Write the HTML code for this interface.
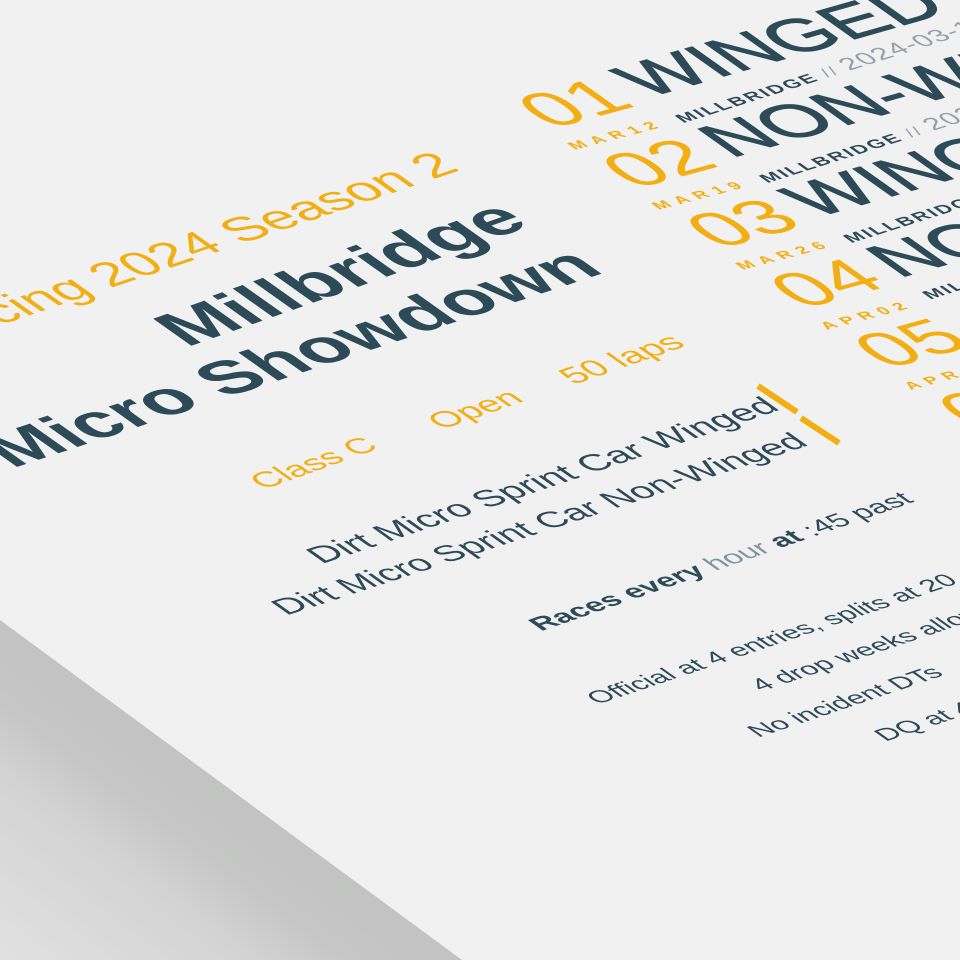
<!DOCTYPE html>
<html><head><meta charset="utf-8">
<style>
html,body{margin:0;padding:0;}
body{width:960px;height:960px;overflow:hidden;background:#f1f1f1;position:relative;font-family:"Liberation Sans",sans-serif;}
.t{position:absolute;white-space:nowrap;line-height:1;transform-origin:0 0;font-family:"Liberation Sans",sans-serif;}
.o{color:#f2ae12;}
.d{color:#2d4a58;}
.g{color:#97a2a8;}
.n{font-size:82px;}
</style></head><body>
<svg width="960" height="960" style="position:absolute;left:0;top:0">
<defs>
<linearGradient id="sh" x1="230" y1="790" x2="40" y2="1046" gradientUnits="userSpaceOnUse">
<stop offset="0" stop-color="#c2c3c2"/>
<stop offset="0.2" stop-color="#c5c6c5"/>
<stop offset="0.38" stop-color="#d2d3d2"/>
<stop offset="1" stop-color="#e4e5e4"/>
</linearGradient>
</defs>
<polygon points="0,620 462,960 0,960" fill="url(#sh)"/>
<line x1="758" y1="386" x2="797" y2="412" stroke="#f2ae12" stroke-width="6"/>
<line x1="801" y1="418" x2="839" y2="443" stroke="#f2ae12" stroke-width="6"/>
</svg>

<div class="t o" style="left:462px;top:170px;font-size:55px;transform:matrix(0.95,-0.32,0.72,0.51,0,0) translate(-100%,-0.846em)">Racing 2024 Season 2</div>

<div class="t d" style="left:360px;top:287px;font-size:77px;font-weight:bold;transform:matrix(0.95,-0.336,0.72,0.51,0,0) translate(-50%,-0.846em)">Millbridge</div>
<div class="t d" style="left:310px;top:371px;font-size:76px;font-weight:bold;transform:matrix(0.95,-0.314,0.72,0.51,0,0) translate(-50%,-0.846em)">Micro Showdown</div>

<div class="t o" style="left:264px;top:490px;font-size:35px;transform:matrix(0.95,-0.34,0.72,0.51,0,0) translate(0,-0.846em)">Class C</div>
<div class="t o" style="left:442px;top:430px;font-size:36px;transform:matrix(0.95,-0.33,0.72,0.51,0,0) translate(0,-0.846em)">Open</div>
<div class="t o" style="left:574px;top:385px;font-size:37px;transform:matrix(0.95,-0.33,0.72,0.51,0,0) translate(0,-0.846em)">50 laps</div>

<div class="t d" style="left:782px;top:410px;font-size:38px;transform:matrix(0.95,-0.32,0.72,0.51,0,0) translate(-100%,-0.846em)">Dirt Micro Sprint Car Winged</div>
<div class="t d" style="left:810px;top:445px;font-size:37px;transform:matrix(0.95,-0.31,0.72,0.51,0,0) translate(-100%,-0.846em)">Dirt Micro Sprint Car Non-Winged</div>

<div class="t d" style="left:542px;top:632px;font-size:30px;transform:matrix(0.95,-0.33,0.72,0.51,0,0) translate(0,-0.846em)"><b>Races every</b> <span style="color:#7d939f">hour</span> <b>at</b> :45 past</div>

<div class="t d" style="left:598px;top:705px;font-size:28px;transform:matrix(0.95,-0.32,0.72,0.51,0,0) translate(0,-0.846em)">Official at 4 entries, splits at 20</div>
<div class="t d" style="left:762px;top:692px;font-size:28px;transform:matrix(0.95,-0.32,0.72,0.51,0,0) translate(0,-0.846em)">4 drop weeks allowed</div>
<div class="t d" style="left:759px;top:738px;font-size:28px;transform:matrix(0.95,-0.32,0.72,0.51,0,0) translate(0,-0.846em)">No incident DTs</div>
<div class="t d" style="left:886px;top:742px;font-size:28px;transform:matrix(0.95,-0.32,0.72,0.51,0,0) translate(0,-0.846em)">DQ at 40x</div>

<!-- row 1 -->
<div class="t o n" style="left:552px;top:130px;transform:matrix(0.95,-0.26,0.72,0.51,0,0) translate(0,-0.846em)">01</div>
<div class="t d" style="left:647px;top:98px;font-size:78px;-webkit-text-stroke:1.5px #2d4a58;transform:matrix(0.95,-0.27,0.72,0.51,0,0) translate(0,-0.846em)">WINGED</div>
<div class="t o" style="left:575px;top:150px;font-size:18px;font-weight:bold;letter-spacing:7px;transform:matrix(0.95,-0.25,0.72,0.51,0,0) translate(0,-0.846em)">MAR12</div>
<div class="t d" style="left:679px;top:120px;font-size:20px;font-weight:bold;letter-spacing:2px;transform:matrix(0.95,-0.3,0.72,0.51,0,0) translate(0,-0.846em)">MILLBRIDGE <span class="g" style="font-weight:normal">//</span> <span class="g" style="font-weight:normal;font-size:28px;letter-spacing:1px">2024-03-14</span></div>

<!-- row 2 -->
<div class="t o n" style="left:636px;top:190px;transform:matrix(0.95,-0.26,0.72,0.51,0,0) translate(0,-0.846em)">02</div>
<div class="t d" style="left:731px;top:158px;font-size:78px;-webkit-text-stroke:1.5px #2d4a58;transform:matrix(0.95,-0.27,0.72,0.51,0,0) translate(0,-0.846em)">NON-WINGED</div>
<div class="t o" style="left:659px;top:210px;font-size:18px;font-weight:bold;letter-spacing:7px;transform:matrix(0.95,-0.25,0.72,0.51,0,0) translate(0,-0.846em)">MAR19</div>
<div class="t d" style="left:763px;top:180px;font-size:20px;font-weight:bold;letter-spacing:2px;transform:matrix(0.95,-0.3,0.72,0.51,0,0) translate(0,-0.846em)">MILLBRIDGE <span class="g" style="font-weight:normal">//</span> <span class="g" style="font-weight:normal;font-size:28px;letter-spacing:1px">2024-03-21</span></div>

<!-- row 3 -->
<div class="t o n" style="left:720px;top:250px;transform:matrix(0.95,-0.26,0.72,0.51,0,0) translate(0,-0.846em)">03</div>
<div class="t d" style="left:815px;top:218px;font-size:78px;-webkit-text-stroke:1.5px #2d4a58;transform:matrix(0.95,-0.27,0.72,0.51,0,0) translate(0,-0.846em)">WINGED</div>
<div class="t o" style="left:743px;top:270px;font-size:18px;font-weight:bold;letter-spacing:7px;transform:matrix(0.95,-0.25,0.72,0.51,0,0) translate(0,-0.846em)">MAR26</div>
<div class="t d" style="left:847px;top:240px;font-size:20px;font-weight:bold;letter-spacing:2px;transform:matrix(0.95,-0.3,0.72,0.51,0,0) translate(0,-0.846em)">MILLBRIDGE <span class="g" style="font-weight:normal">//</span> <span class="g" style="font-weight:normal;font-size:28px;letter-spacing:1px">2024-03-28</span></div>

<!-- row 4 -->
<div class="t o n" style="left:804px;top:310px;transform:matrix(0.95,-0.26,0.72,0.51,0,0) translate(0,-0.846em)">04</div>
<div class="t d" style="left:899px;top:278px;font-size:78px;-webkit-text-stroke:1.5px #2d4a58;transform:matrix(0.95,-0.27,0.72,0.51,0,0) translate(0,-0.846em)">NON-WINGED</div>
<div class="t o" style="left:827px;top:330px;font-size:18px;font-weight:bold;letter-spacing:7px;transform:matrix(0.95,-0.25,0.72,0.51,0,0) translate(0,-0.846em)">APR02</div>
<div class="t d" style="left:931px;top:300px;font-size:20px;font-weight:bold;letter-spacing:2px;transform:matrix(0.95,-0.3,0.72,0.51,0,0) translate(0,-0.846em)">MILLBRIDGE</div>

<!-- row 5 -->
<div class="t o n" style="left:888px;top:370px;transform:matrix(0.95,-0.26,0.72,0.51,0,0) translate(0,-0.846em)">05</div>
<div class="t o" style="left:911px;top:390px;font-size:18px;font-weight:bold;letter-spacing:7px;transform:matrix(0.95,-0.25,0.72,0.51,0,0) translate(0,-0.846em)">APR09</div>

<!-- row 6 -->
<div class="t o n" style="left:972px;top:430px;transform:matrix(0.95,-0.26,0.72,0.51,0,0) translate(0,-0.846em)">06</div>
</body></html>
